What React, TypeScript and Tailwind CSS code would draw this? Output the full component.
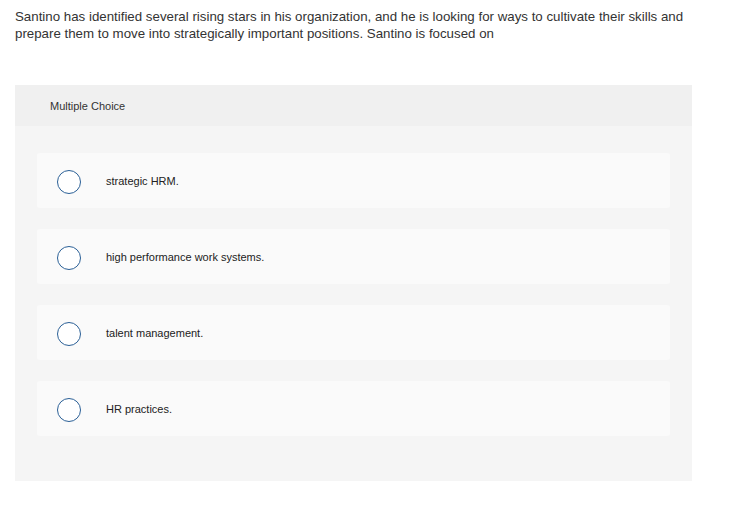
import React from 'react';

const options = [
  'strategic HRM.',
  'high performance work systems.',
  'talent management.',
  'HR practices.',
];

const App: React.FC = () => {
  return (
    <div className="min-h-[517px] bg-white font-['Liberation_Sans',Arial,sans-serif] text-[#333]">
      <div className="px-[15px] pt-[8px]">
        <p className="w-[680px] text-[13.3px] leading-[17px] text-[#333]">
          Santino has identified several rising stars in his organization, and he is looking for ways to cultivate their skills and
          prepare them to move into strategically important positions. Santino is focused on
        </p>
      </div>

      {/* Question panel */}
      <div className="ml-[15px] mt-[43px] w-[677px] bg-[#f5f5f5]">
        <div className="flex h-[41px] items-center bg-[#f0f0f0] pl-[35px] pt-[2px] text-[11px] text-[#333]">
          Multiple Choice
        </div>
        <div className="flex flex-col gap-[21px] px-[22px] pb-[45px] pt-[27px]">
          {options.map((opt, index) => (
            <div key={index} className="flex h-[55px] items-center rounded-[3px] bg-[#fafafa] pl-[20px] pt-[2px]">
              <span className="h-[24px] w-[24px] shrink-0 rounded-full border-[1.5px] border-[#2a5f96] bg-white" />
              <span className="ml-[25px] text-[11px] text-[#222]">{opt}</span>
            </div>
          ))}
        </div>
      </div>
    </div>
  );
};

export default App;
